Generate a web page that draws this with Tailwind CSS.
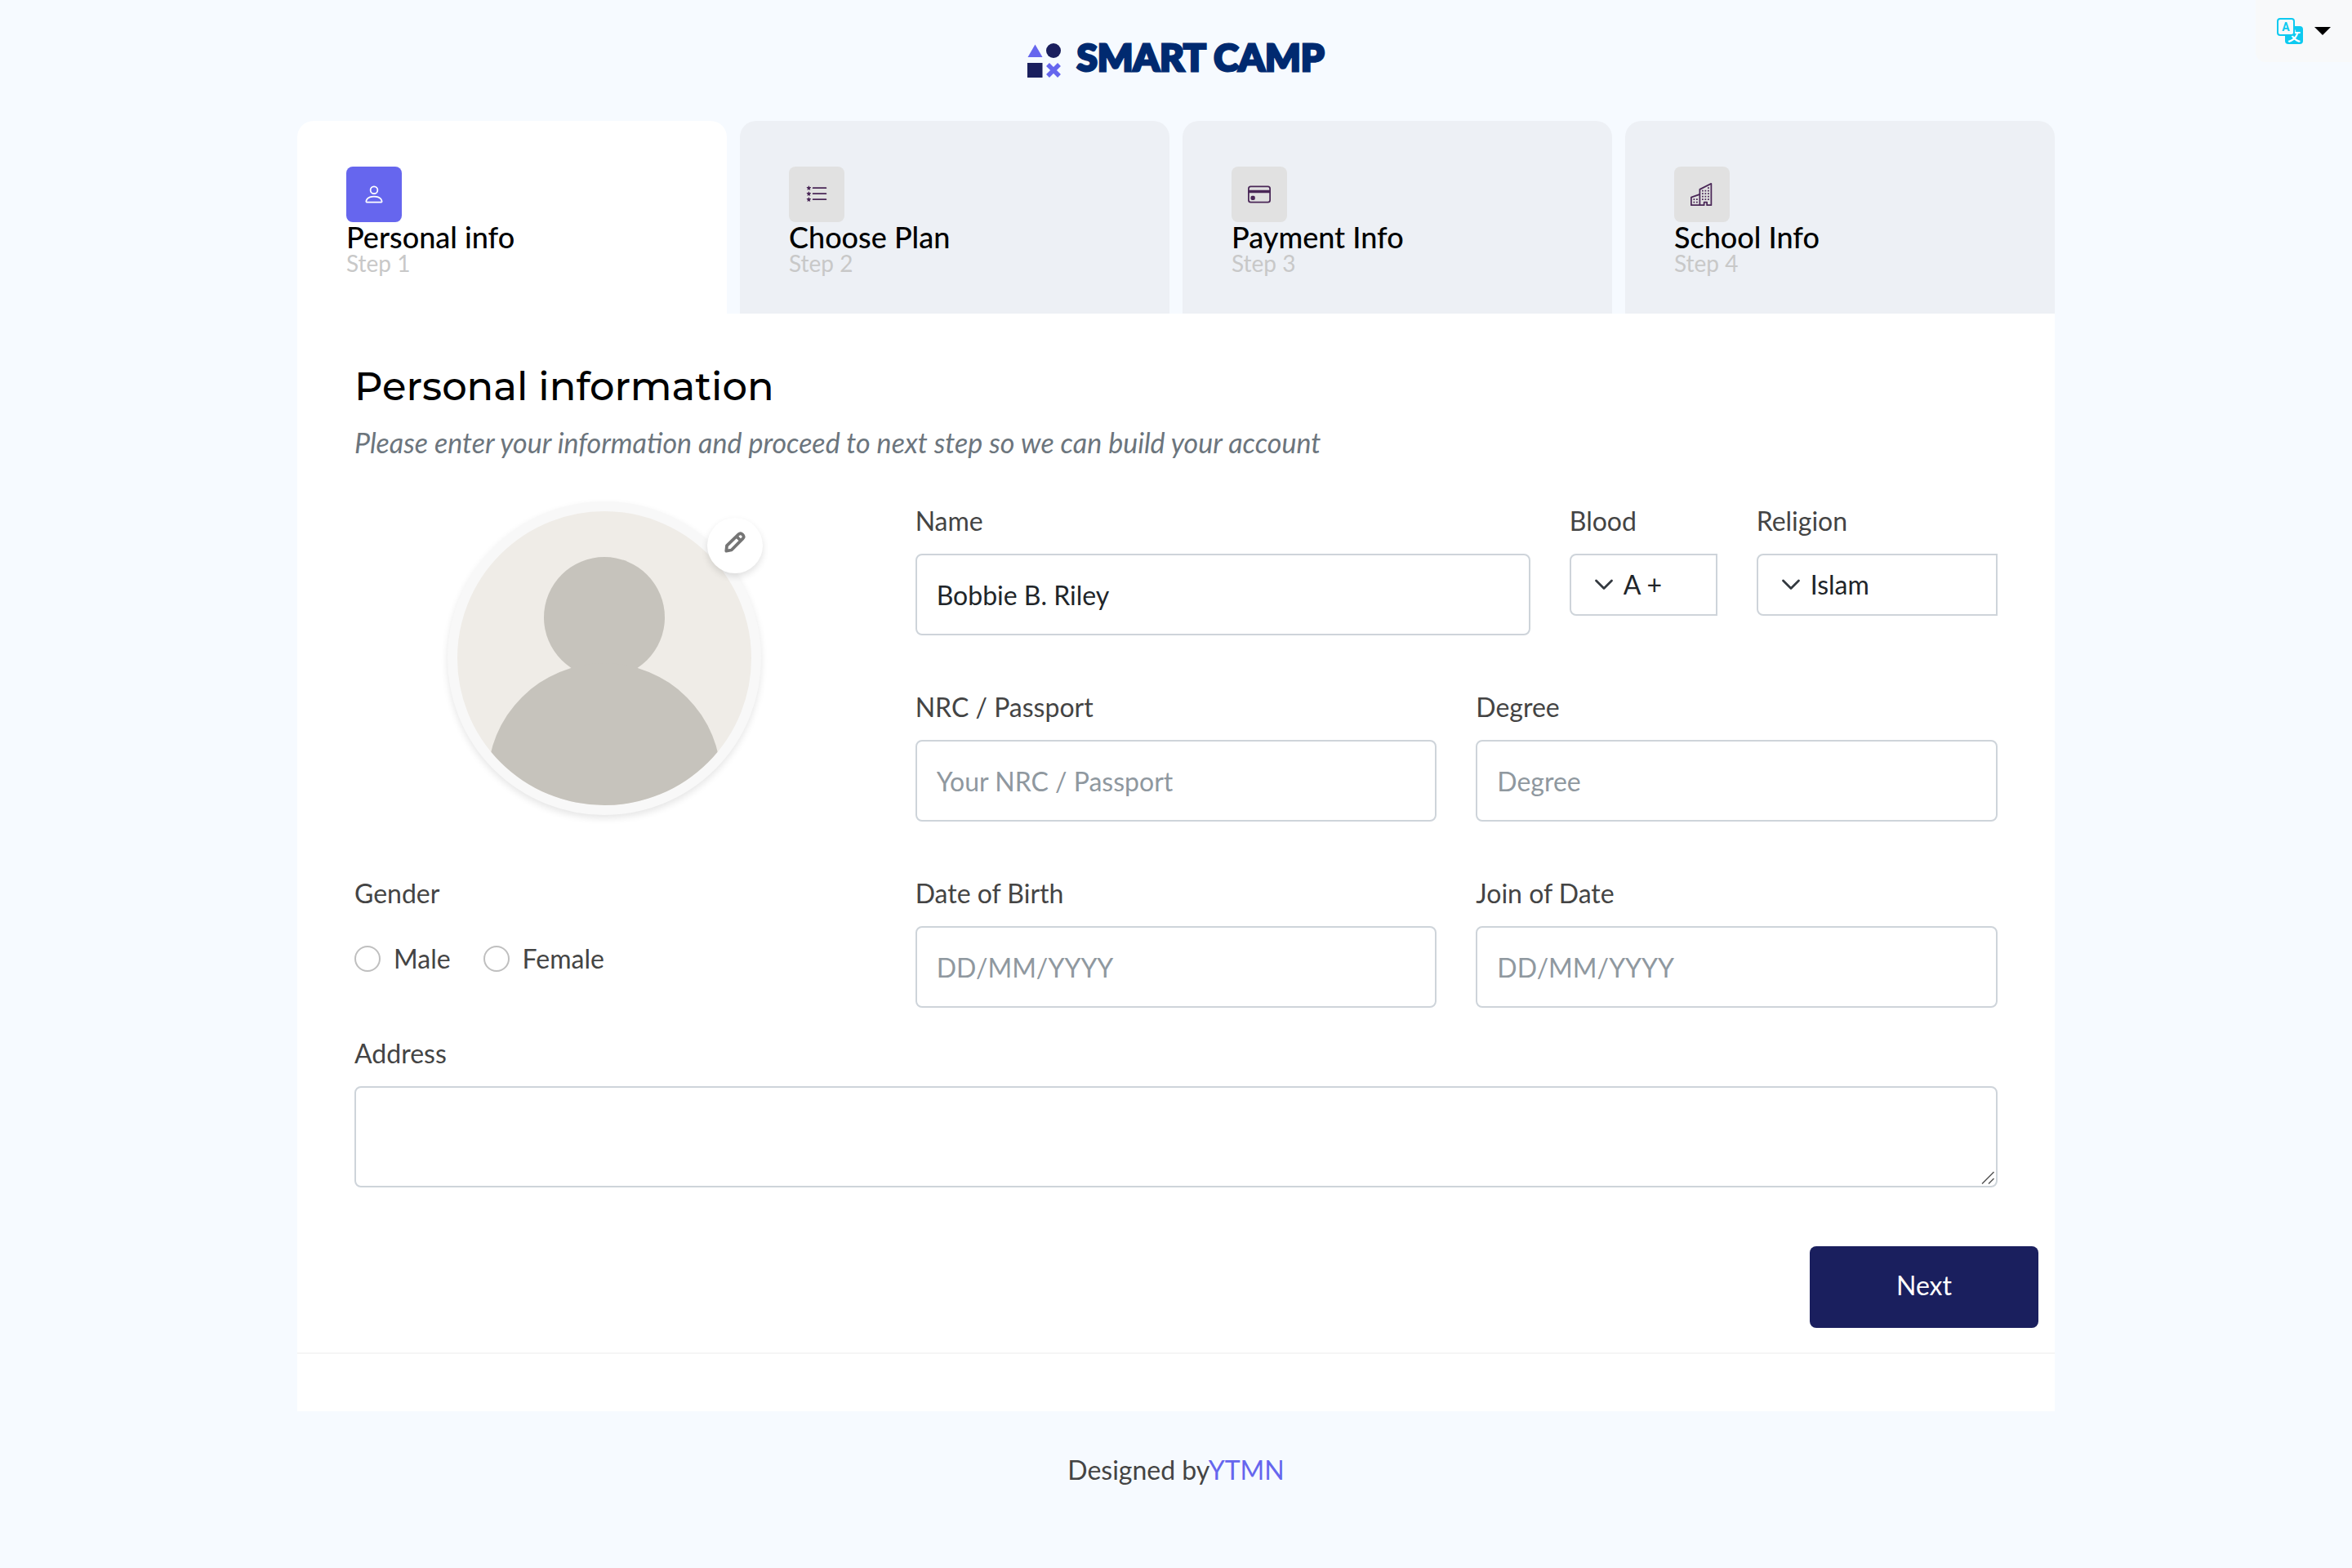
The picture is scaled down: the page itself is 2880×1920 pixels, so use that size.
<!DOCTYPE html>
<html lang="en">
<head>
<meta charset="utf-8">
<meta name="viewport" content="width=device-width, initial-scale=1">
<title>Smart Camp</title>
<script src="https://cdn.jsdelivr.net/npm/@tailwindcss/browser@4"></script>
</head>
<body class="min-h-screen bg-[#f6faff] font-['Lato',sans-serif] text-[32px] leading-[48px] text-[#444444]">

<header class="grid grid-cols-[1fr_auto_1fr] items-start">
  <a href="#" class="col-start-2 flex h-[148px] items-center gap-[18px]">
    <svg class="h-[42px] w-[42px]" viewBox="0 0 42 42" aria-hidden="true">
      <path d="M9.500 1.500L18.500 17H.5Z" fill="#6666ee"/>
      <circle cx="32" cy="9" r="9" fill="#1a1f5e"/>
      <rect x="0" y="24" width="18.500" height="18" fill="#1a1f5e"/>
      <path d="M25 26L39 40M39 26L25 40" stroke="#6666ee" stroke-width="5.500"/>
    </svg>
    <span class="pb-2 text-[46px] leading-[60px] font-black text-[#002a70] [-webkit-text-stroke:3px_#002a70]">SMART CAMP</span>
  </a>
  <button type="button" aria-label="Change language" class="flex h-[76px] items-center gap-[14px] justify-self-end rounded-bl-xl bg-[#f8f9fa] pr-[26px] pl-[26px]">
    <svg class="h-8 w-8" viewBox="0 0 32 32" aria-hidden="true">
      <rect x="10" y="10" width="22" height="22" rx="4" fill="#0dcaf0"/>
      <text x="13" y="27.500" font-size="16" font-weight="700" fill="#ffffff" font-family="Noto Sans CJK SC, sans-serif">文</text>
      <rect x="1" y="1" width="20" height="20" rx="3" fill="#f8f9fa" stroke="#0dcaf0" stroke-width="2"/>
      <text x="11" y="16" font-size="14" font-weight="700" text-anchor="middle" fill="#0dcaf0" font-family="Roboto, sans-serif">A</text>
    </svg>
    <svg class="h-[10px] w-5" viewBox="0 0 20 10" aria-hidden="true"><path d="M0 0H20L10 10Z" fill="#000000"/></svg>
  </button>
</header>

<main class="mx-auto w-full max-w-[2152px]">
  <nav aria-label="Steps">
    <ol class="grid grid-cols-4 gap-4">
      <li>
        <a href="#" aria-current="step" class="block rounded-t-[20px] bg-white px-[60px] pt-14 pb-12">
          <span class="flex h-[68px] w-[68px] items-center justify-center rounded-lg bg-[#6666ee] text-white">
            <svg class="h-7 w-7" viewBox="0 0 16 16" fill="currentColor" aria-hidden="true"><path d="M8 8a3 3 0 1 0 0-6 3 3 0 0 0 0 6zm2-3a2 2 0 1 1-4 0 2 2 0 0 1 4 0zm4 8c0 1-1 1-1 1H3s-1 0-1-1 1-4 6-4 6 3 6 4zm-1-.004c-.001-.246-.154-.986-.832-1.664C11.516 10.680 10.289 10 8 10c-2.290 0-3.516.68-4.168 1.332-.678.678-.83 1.418-.832 1.664h10z"/></svg>
          </span>
          <span class="block text-4xl leading-9 font-medium text-black">Personal info</span>
          <span class="block text-[28px] leading-7 text-[#c8c8c8]">Step 1</span>
        </a>
      </li>
      <li>
        <a href="#" class="block rounded-t-[20px] bg-[#edf0f5] px-[60px] pt-14 pb-12">
          <span class="flex h-[68px] w-[68px] items-center justify-center rounded-lg bg-[#e1e1e1] text-[#4a2757]">
            <svg class="h-7 w-7" viewBox="0 0 16 16" fill="currentColor" aria-hidden="true">
              <path d="M5 11.500a.5.5 0 0 1 .5-.5h9a.5.5 0 0 1 0 1h-9a.5.5 0 0 1-.5-.5zm0-4a.5.5 0 0 1 .5-.5h9a.5.5 0 0 1 0 1h-9a.5.5 0 0 1-.5-.5zm0-4a.5.5 0 0 1 .5-.5h9a.5.5 0 0 1 0 1h-9a.5.5 0 0 1-.5-.5z"/>
              <path id="star" d="M2.242 2.194a.27.27 0 0 1 .516 0l.162.53c.035.115.14.194.258.194h.551c.259 0 .37.333.164.493l-.468.363a.277.277 0 0 0-.094.3l.173.569c.078.256-.213.462-.423.3l-.417-.324a.267.267 0 0 0-.328 0l-.417.323c-.21.163-.5-.043-.423-.299l.173-.57a.277.277 0 0 0-.094-.299l-.468-.363c-.206-.16-.095-.493.164-.493h.55a.271.271 0 0 0 .259-.194l.162-.53z"/>
              <use href="#star" y="4"/>
              <use href="#star" y="8"/>
            </svg>
          </span>
          <span class="block text-4xl leading-9 font-medium text-black">Choose Plan</span>
          <span class="block text-[28px] leading-7 text-[#c8c8c8]">Step 2</span>
        </a>
      </li>
      <li>
        <a href="#" class="block rounded-t-[20px] bg-[#edf0f5] px-[60px] pt-14 pb-12">
          <span class="flex h-[68px] w-[68px] items-center justify-center rounded-lg bg-[#e1e1e1] text-[#4a2757]">
            <svg class="h-7 w-7" viewBox="0 0 16 16" fill="currentColor" aria-hidden="true"><path d="M0 4a2 2 0 0 1 2-2h12a2 2 0 0 1 2 2v8a2 2 0 0 1-2 2H2a2 2 0 0 1-2-2V4zm2-1a1 1 0 0 0-1 1v1h14V4a1 1 0 0 0-1-1H2zm13 4H1v5a1 1 0 0 0 1 1h12a1 1 0 0 0 1-1V7z"/><path d="M2 10a1 1 0 0 1 1-1h1a1 1 0 0 1 1 1v1a1 1 0 0 1-1 1H3a1 1 0 0 1-1-1v-1z"/></svg>
          </span>
          <span class="block text-4xl leading-9 font-medium text-black">Payment Info</span>
          <span class="block text-[28px] leading-7 text-[#c8c8c8]">Step 3</span>
        </a>
      </li>
      <li>
        <a href="#" class="block rounded-t-[20px] bg-[#edf0f5] px-[60px] pt-14 pb-12">
          <span class="flex h-[68px] w-[68px] items-center justify-center rounded-lg bg-[#e1e1e1] text-[#4a2757]">
            <svg class="h-7 w-7" viewBox="0 0 16 16" fill="currentColor" aria-hidden="true"><path fill-rule="evenodd" d="M14.763.075A.5.5 0 0 1 15 .5v15a.5.5 0 0 1-.5.5h-3a.5.5 0 0 1-.5-.5V14h-1v1.500a.5.5 0 0 1-.5.5h-9a.5.5 0 0 1-.5-.5V10a.5.5 0 0 1 .342-.474L6 7.640V4.500a.5.5 0 0 1 .276-.447l8-4a.5.5 0 0 1 .487.022zM6 8.694 1 10.360V15h5V8.694zM7 15h2v-1.500a.5.5 0 0 1 .5-.5h2a.5.5 0 0 1 .5.5V15h2V1.309l-7 3.500V15z"/><path d="M2 11h1v1H2v-1zm2 0h1v1H4v-1zm-2 2h1v1H2v-1zm2 0h1v1H4v-1zm4-4h1v1H8V9zm2 0h1v1h-1V9zm-2 2h1v1H8v-1zm2 0h1v1h-1v-1zm2-2h1v1h-1V9zm0 2h1v1h-1v-1zM8 7h1v1H8V7zm2 0h1v1h-1V7zm2 0h1v1h-1V7zM8 5h1v1H8V5zm2 0h1v1h-1V5zm2 0h1v1h-1V5zm0-2h1v1h-1V3z"/></svg>
          </span>
          <span class="block text-4xl leading-9 font-medium text-black">School Info</span>
          <span class="block text-[28px] leading-7 text-[#c8c8c8]">Step 4</span>
        </a>
      </li>
    </ol>
  </nav>

  <form class="bg-white pb-[70px]">
    <div class="px-[70px] pt-15">
      <h1 class="font-['Montserrat','Inter',sans-serif] text-5xl leading-[58px] font-medium text-black">Personal information</h1>
      <p class="mt-4 text-[34px] text-[#6c757d] italic">Please enter your information and proceed to next step so we can build your account</p>

      <div class="mt-12 grid grid-cols-12 gap-x-12">
        <div class="col-span-4">
          <div class="flex justify-center pr-[26px]">
            <div class="relative">
              <svg class="h-96 w-96 rounded-full border-12 border-[#f8f8f8] bg-[#efece7] shadow-[0_4px_8px_rgba(0,0,0,0.1)]" viewBox="0 0 360 360" role="img" aria-label="Profile picture">
                <circle cx="180" cy="130" r="74" fill="#c6c3bc"/>
                <circle cx="180" cy="329" r="143" fill="#c6c3bc"/>
              </svg>
              <button type="button" aria-label="Edit picture" class="absolute top-5 -right-[2px] flex h-[68px] w-[68px] justify-center rounded-full bg-white pt-[17px] shadow-[0_4px_8px_rgba(0,0,0,0.12)]">
                <svg class="h-[26px] w-[26px]" viewBox="0 0 26 26" fill="none" stroke="#757575" stroke-width="3.800" stroke-linejoin="round" aria-hidden="true"><path d="M3 17.200L17.500 3.200Q19.800 1 22.300 3.500Q24.800 6 22.700 8.300L8.700 22.500L2.300 23.700ZM15 6L20 11"/></svg>
              </button>
            </div>
          </div>
          <fieldset class="mt-[72px]">
            <legend>Gender</legend>
            <div class="mt-8 flex gap-10">
              <label class="flex items-center gap-4"><input type="radio" name="gender" class="h-8 w-8 appearance-none rounded-full border-2 border-[#bfbfbf] bg-white">Male</label>
              <label class="flex items-center gap-4"><input type="radio" name="gender" class="h-8 w-8 appearance-none rounded-full border-2 border-[#bfbfbf] bg-white">Female</label>
            </div>
          </fieldset>
        </div>

        <div class="col-span-8 grid grid-cols-12 content-start gap-x-12 gap-y-16">
          <div class="col-span-7">
            <label for="name" class="block">Name</label>
            <input id="name" type="text" value="Bobbie B. Riley" class="mt-4 block h-[100px] w-full rounded-lg border-2 border-[#ced4da] bg-white px-6 text-[#212529]">
          </div>
          <div class="col-span-2">
            <label for="blood" class="block">Blood</label>
            <div class="relative mt-4">
              <select id="blood" class="block h-[76px] w-full appearance-none rounded-l-lg border-2 border-[#ced4da] bg-white pl-16 text-[#212529]"><option>A +</option></select>
              <svg class="pointer-events-none absolute top-[30px] left-[30px] h-4 w-6" viewBox="0 0 24 16" fill="none" stroke="#343a40" stroke-width="2.800" stroke-linecap="round" stroke-linejoin="round" aria-hidden="true"><path d="M2.500 3L12 12.500L21.500 3"/></svg>
            </div>
          </div>
          <div class="col-span-3">
            <label for="religion" class="block">Religion</label>
            <div class="relative mt-4">
              <select id="religion" class="block h-[76px] w-full appearance-none rounded-l-lg border-2 border-[#ced4da] bg-white pl-16 text-[#212529]"><option>Islam</option></select>
              <svg class="pointer-events-none absolute top-[30px] left-[30px] h-4 w-6" viewBox="0 0 24 16" fill="none" stroke="#343a40" stroke-width="2.800" stroke-linecap="round" stroke-linejoin="round" aria-hidden="true"><path d="M2.500 3L12 12.500L21.500 3"/></svg>
            </div>
          </div>
          <div class="col-span-6">
            <label for="nrc" class="block">NRC / Passport</label>
            <input id="nrc" type="text" placeholder="Your NRC / Passport" class="mt-4 block h-[100px] w-full rounded-lg border-2 border-[#ced4da] bg-white px-6 text-[#212529] placeholder:text-[#8f989f]">
          </div>
          <div class="col-span-6">
            <label for="degree" class="block">Degree</label>
            <input id="degree" type="text" placeholder="Degree" class="mt-4 block h-[100px] w-full rounded-lg border-2 border-[#ced4da] bg-white px-6 text-[#212529] placeholder:text-[#8f989f]">
          </div>
          <div class="col-span-6">
            <label for="birth" class="block">Date of Birth</label>
            <input id="birth" type="text" placeholder="DD/MM/YYYY" class="mt-4 block h-[100px] w-full rounded-lg border-2 border-[#ced4da] bg-white px-6 text-[#212529] placeholder:text-[#8f989f]">
          </div>
          <div class="col-span-6">
            <label for="join" class="block">Join of Date</label>
            <input id="join" type="text" placeholder="DD/MM/YYYY" class="mt-4 block h-[100px] w-full rounded-lg border-2 border-[#ced4da] bg-white px-6 text-[#212529] placeholder:text-[#8f989f]">
          </div>
        </div>
      </div>

      <div class="mt-8">
        <label for="address" class="block">Address</label>
        <div class="relative mt-4">
          <textarea id="address" class="block h-[124px] w-full resize-none rounded-lg border-2 border-[#ced4da] bg-white px-6 py-3 text-[#212529]"></textarea>
          <svg class="pointer-events-none absolute right-1 bottom-1 h-4 w-4" viewBox="0 0 16 16" stroke="#555555" stroke-width="1.500" aria-hidden="true"><path d="M1 15.500L15.500 1M9 15.500L15.500 9"/></svg>
        </div>
      </div>
    </div>

    <div class="mt-[72px] flex justify-end border-b-2 border-[#f5f5f5] pr-5 pb-[30px]">
      <button type="submit" class="h-[100px] w-[280px] rounded-lg bg-[#1a1f5e] pb-1 text-white">Next</button>
    </div>
  </form>
</main>

<footer class="py-12 text-center">Designed by<a href="#" class="text-[#6666ee]">YTMN</a></footer>

</body>
</html>
